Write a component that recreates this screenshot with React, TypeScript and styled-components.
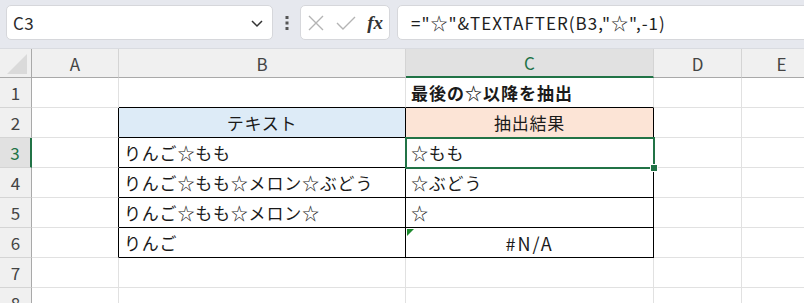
import React from "react";
import styled, { createGlobalStyle, css } from "styled-components";

const Global = createGlobalStyle`
  html, body { margin: 0; padding: 0; background: #ffffff; }
  body { font-family: "Noto Sans CJK JP", "Noto Sans", sans-serif; overflow: hidden; }
`;

const FONT = `"Noto Sans CJK JP", "Noto Sans", sans-serif`;
const GREEN = "#217346";

const Page = styled.div`
  width: 804px;
  height: 303px;
  overflow: hidden;
  background: #fff;
`;

const Toolbar = styled.div`
  display: flex;
  align-items: flex-start;
  height: 49px;
  box-sizing: border-box;
  padding: 5px 0 0 6px;
  background: #e6e8ee;
  border-bottom: 1px solid #d9dbe0;
`;

const Box = styled.div<{ $w?: number }>`
  height: 35px;
  box-sizing: border-box;
  background: #fff;
  border: 1px solid #d6d7db;
  border-radius: 5px;
  display: flex;
  align-items: center;
  ${(p) => (p.$w ? `width: ${p.$w}px; flex: none;` : "flex: 1; margin-right: -10px;")}
`;

const NameText = styled.span`
  flex: 1;
  padding-left: 6px;
  font: 17px ${FONT};
  letter-spacing: 0.5px;
  color: #2b2b2b;
`;

const Dots = styled.div`
  width: 27px;
  height: 35px;
  display: flex;
  align-items: center;
  justify-content: center;
  flex: none;
`;

const FxBox = styled(Box)`
  justify-content: space-between;
  padding: 0 4px 0 6px;
  margin-right: 7px;
`;

const Fx = styled.span`
  font: italic bold 19px "Liberation Serif", serif;
  color: #333;
  padding-right: 2px;
`;

const Formula = styled.span`
  padding-left: 13px;
  font: 17px ${FONT};
  letter-spacing: 1px;
  color: #1e1e1e;
  white-space: nowrap;
`;

const Sheet = styled.div`
  position: relative;
  display: grid;
  grid-template-columns: 32px 87px 287px 248px 88px 80px;
  grid-template-rows: 29px repeat(8, 30px);
`;

const HeadCell = styled.div<{ $sel?: boolean; $row?: boolean }>`
  box-sizing: border-box;
  display: flex;
  align-items: center;
  justify-content: center;
  font: 17px ${FONT};
  color: ${(p) => (p.$sel ? GREEN : "#444")};
  background: ${(p) => (p.$sel ? "#e1e1e1" : "#f0f0f0")};
  border-right: 1px solid #d4d4d4;
  border-bottom: 1px solid #d4d4d4;
  ${(p) =>
    p.$row
      ? css`
          border-right: ${p.$sel ? `2px solid ${GREEN}` : "1px solid #a9a9a9"};
        `
      : css`
          border-bottom: ${p.$sel ? `2px solid ${GREEN}` : "1px solid #a9a9a9"};
        `}
`;

const Corner = styled(HeadCell)`
  border-right: 1px solid #a9a9a9;
  border-bottom: 1px solid #a9a9a9;
  align-items: flex-end;
  justify-content: flex-end;
  padding: 0 4px 3px 0;
`;

const Cell = styled.div<{
  $r?: string;
  $b?: string;
  $bg?: string;
  $align?: string;
  $bold?: boolean;
  $spacing?: number;
  $size?: number;
}>`
  box-sizing: border-box;
  display: flex;
  align-items: center;
  justify-content: ${(p) => p.$align || "flex-start"};
  padding-left: ${(p) => (p.$align === "center" ? "0" : "5px")};
  font: ${(p) => (p.$bold ? "bold" : "normal")} ${(p) => p.$size ?? 17}px ${FONT};
  letter-spacing: ${(p) => p.$spacing ?? 0.8}px;
  color: #1a1a1a;
  white-space: nowrap;
  background: ${(p) => p.$bg || "#fff"};
  border-right: 1px solid ${(p) => p.$r || "#e1e1e1"};
  border-bottom: 1px solid ${(p) => p.$b || "#e1e1e1"};
  overflow: visible;
`;

const Selection = styled.div`
  position: absolute;
  left: 405px;
  top: 88px;
  width: 250px;
  height: 32px;
  box-sizing: border-box;
  border: 2px solid ${GREEN};
  pointer-events: none;
`;

const Handle = styled.div`
  position: absolute;
  right: -5px;
  bottom: -5px;
  width: 6px;
  height: 6px;
  background: ${GREEN};
  border: 1px solid #fff;
`;

const ErrFlag = styled.div`
  position: absolute;
  left: 407px;
  top: 180px;
  width: 0;
  height: 0;
  border-top: 7px solid #1e8a2e;
  border-right: 7px solid transparent;
`;

const cols = ["A", "B", "C", "D", "E"];
const B = "#000";

type Row = { b: string; c: string; cAlign?: string; cSpacing?: number; cSize?: number };
const data: Row[] = [
  { b: "りんご☆もも", c: "☆もも" },
  { b: "りんご☆もも☆メロン☆ぶどう", c: "☆ぶどう" },
  { b: "りんご☆もも☆メロン☆", c: "☆" },
  { b: "りんご", c: "#N/A", cAlign: "center", cSpacing: 2, cSize: 18 },
];

const App: React.FC = () => {
  return (
    <Page>
      <Global />
      <Toolbar>
        <Box $w={267}>
          <NameText>C3</NameText>
          <svg width="14" height="10" viewBox="0 0 14 10" style={{ marginRight: 8 }}>
            <path d="M2 3 L7 8 L12 3" fill="none" stroke="#333" strokeWidth="1.5" />
          </svg>
        </Box>
        <Dots>
          <svg width="4" height="14" viewBox="0 0 4 14">
            <rect x="0.5" y="0" width="3" height="3" fill="#555" />
            <rect x="0.5" y="5.5" width="3" height="3" fill="#555" />
            <rect x="0.5" y="11" width="3" height="3" fill="#555" />
          </svg>
        </Dots>
        <FxBox $w={90}>
          <svg width="18" height="18" viewBox="0 0 18 18">
            <path d="M2 2 L16 16 M16 2 L2 16" stroke="#b4b4b4" strokeWidth="1.4" fill="none" />
          </svg>
          <svg width="20" height="16" viewBox="0 0 20 16">
            <path d="M1 8 L7 14 L19 2" stroke="#b4b4b4" strokeWidth="1.4" fill="none" />
          </svg>
          <Fx>fx</Fx>
        </FxBox>
        <Box>
          <Formula>="☆"&amp;TEXTAFTER(B3,"☆",-1)</Formula>
        </Box>
      </Toolbar>
      <Sheet>
        <Corner>
          <svg width="20" height="20" viewBox="0 0 20 20">
            <path d="M20 0 L20 20 L0 20 Z" fill="#dadada" />
          </svg>
        </Corner>
        {cols.map((c) => (
          <HeadCell key={c} $sel={c === "C"}>
            {c}
          </HeadCell>
        ))}

        {/* row 1 */}
        <HeadCell $row>1</HeadCell>
        <Cell />
        <Cell $b={B} />
        <Cell $b={B} $bold $spacing={1}>
          最後の☆以降を抽出
        </Cell>
        <Cell />
        <Cell />

        {/* row 2 */}
        <HeadCell $row>2</HeadCell>
        <Cell $r={B} />
        <Cell $r={B} $b={B} $bg="#ddebf7" $align="center">
          テキスト
        </Cell>
        <Cell $r={B} $b={B} $bg="#fce4d6" $align="center">
          抽出結果
        </Cell>
        <Cell />
        <Cell />

        {data.map((d, i) => (
          <React.Fragment key={i}>
            <HeadCell $row $sel={i === 0}>
              {i + 3}
            </HeadCell>
            <Cell $r={B} />
            <Cell $r={B} $b={B}>
              {d.b}
            </Cell>
            <Cell $r={B} $b={B} $align={d.cAlign} $spacing={d.cSpacing} $size={d.cSize}>
              {d.c}
            </Cell>
            <Cell />
            <Cell />
          </React.Fragment>
        ))}

        {[7, 8].map((n) => (
          <React.Fragment key={n}>
            <HeadCell $row>{n}</HeadCell>
            <Cell />
            <Cell />
            <Cell />
            <Cell />
            <Cell />
          </React.Fragment>
        ))}

        <Selection>
          <Handle />
        </Selection>
        <ErrFlag />
      </Sheet>
    </Page>
  );
};

export default App;
